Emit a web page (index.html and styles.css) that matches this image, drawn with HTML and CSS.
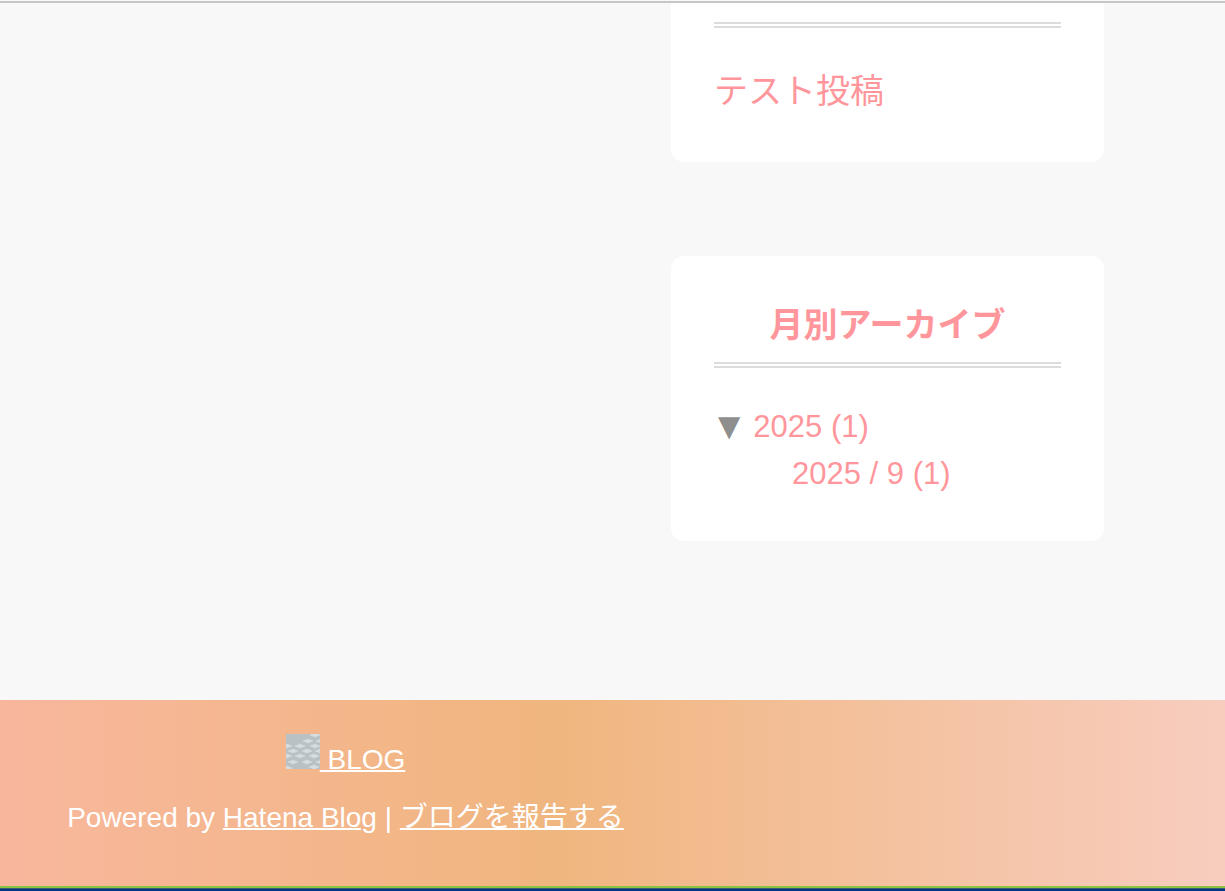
FILE: index.html
```html
<!DOCTYPE html>
<html lang="ja">
<head>
  <meta charset="UTF-8">
  <meta name="viewport" content="width=device-width, initial-scale=1.0">
  <title>BLOG</title>
  <link rel="stylesheet" href="styles.css">
</head>
<body>
  <main class="content">
    <!-- Sidebar -->
    <aside class="sidebar">
      <section class="module module-recent">
        <div class="module-line"></div>
        <a class="entry-link" href="#">テスト投稿</a>
      </section>

      <section class="module">
        <h2 class="module-title">月別アーカイブ</h2>
        <ul class="archive">
          <li class="archive-year">
            <button class="archive-toggle" type="button" aria-label="2025">▼</button>
            <a href="#">2025 (1)</a>
          </li>
          <li class="archive-month"><a href="#">2025 / 9 (1)</a></li>
        </ul>
      </section>
    </aside>
  </main>

  <!-- Footer -->
  <footer class="footer">
    <div class="footer-inner">
      <p>
        <a href="#"><svg class="blog-icon" viewBox="0 0 34 35" aria-hidden="true">
          <defs>
            <path id="scale" d="M-5 0 Q-2 -1 0 -2 Q2 -1 5 0 Q2 1 0 2 Q-2 1 -5 0Z"/>
          </defs>
          <rect width="34" height="35" fill="#b8c1c4"/>
          <g fill="#d6dde0" stroke="#d6dde0" stroke-width="0.6">
            <use href="#scale" x="29" y="1"/>
            <use href="#scale" x="22" y="7"/><use href="#scale" x="35" y="7"/>
            <use href="#scale" x="1" y="12"/><use href="#scale" x="14" y="12"/><use href="#scale" x="29" y="12"/>
            <use href="#scale" x="7" y="17"/><use href="#scale" x="21" y="17"/><use href="#scale" x="34" y="17"/>
            <use href="#scale" x="1" y="22"/><use href="#scale" x="14" y="22"/><use href="#scale" x="28" y="22"/>
            <use href="#scale" x="7" y="28"/><use href="#scale" x="21" y="28"/><use href="#scale" x="35" y="28"/>
            <use href="#scale" x="1" y="34"/><use href="#scale" x="28" y="33"/>
          </g>
        </svg> BLOG</a>
      </p>
      <p>Powered by <a href="#">Hatena Blog</a> | <a href="#">ブログを報告する</a></p>
    </div>
  </footer>
  <div class="bottom-bar"></div>
</body>
</html>
```
FILE: styles.css
```css
/* Global Styles */
* {
  box-sizing: border-box;
}

body {
  margin: 0;
  min-height: 100vh;
  display: flex;
  flex-direction: column;
  font-family: "Liberation Sans", "Noto Sans CJK JP", sans-serif;
  background: #f8f8f8;
  color: #8e8e8e;
}

a {
  color: #ff969c;
  text-decoration: none;
}

/* Main area */
.content {
  flex: 1;
  display: flex;
  justify-content: flex-end;
  margin-top: 1px;
  padding-right: 121px;
  border-top: 2px solid #c5c7c6;
}

.sidebar {
  width: 433px;
}

.module {
  margin-bottom: 94px;
  padding: 43px 43px 44px;
  border-radius: 13px;
  background: #fff;
}

.module-recent {
  padding-top: 19px;
  padding-bottom: 42px;
  border-top-left-radius: 0;
  border-top-right-radius: 0;
}

.module-title,
.module-line {
  margin: 0 0 35px;
  border-bottom: 6px double #dcdcdc;
}

.module-title {
  padding-bottom: 10px;
  font-size: 34px;
  line-height: 53px;
  text-align: center;
  color: #ff969c;
}

.entry-link {
  display: block;
  font-size: 34px;
  line-height: 57px;
}

/* Archive */
.archive {
  margin: 0;
  padding: 0;
  list-style: none;
  font-size: 31px;
  line-height: 47px;
}

.archive-year {
  display: flex;
  gap: 13px;
  padding-left: 4px;
}

.archive-toggle {
  padding: 0;
  border: none;
  background: none;
  color: inherit;
  font-family: "DejaVu Sans", sans-serif;
  font-size: 29px;
  line-height: 45px;
  cursor: pointer;
}

.archive-month {
  padding-left: 78px;
}

/* Footer */
.footer {
  padding: 31px 0 39px;
  background: linear-gradient(90deg, #f8b79d 0%, #f0b67f 45%, #f8cdbf 100%);
  color: #fff;
  font-size: 28px;
  line-height: 58px;
}

.footer-inner {
  max-width: 691px;
  text-align: center;
}

.footer p {
  margin: 0;
}

.footer a {
  color: #fff;
  text-decoration: underline;
  text-decoration-thickness: 2px;
}

.blog-icon {
  width: 34px;
  height: 35px;
}

.bottom-bar {
  height: 5px;
  border-top: 2px solid #8cc341;
  background: linear-gradient(#3d5a78 1px, #003580 1px);
}
```
